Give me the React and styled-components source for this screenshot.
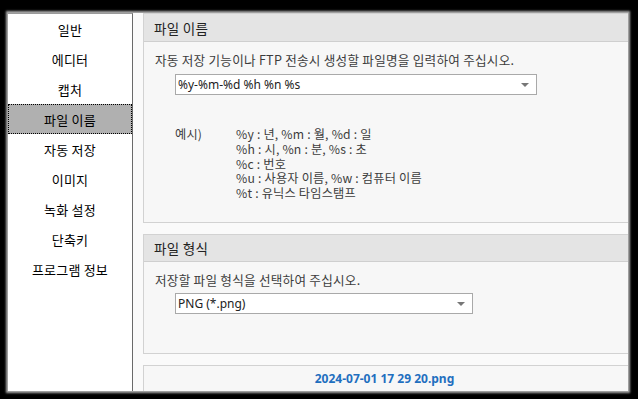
import React from 'react';
import styled, { createGlobalStyle } from 'styled-components';

const GlobalStyle = createGlobalStyle`
  html, body {
    margin: 0;
    padding: 0;
    background: #000;
  }
  body {
    font-family: 'Noto Sans CJK KR', 'Noto Sans', sans-serif;
  }
`;

const Frame = styled.div`
  width: 638px;
  height: 399px;
  box-sizing: border-box;
  padding: 13px 10px 8px 8px;
  background: #000;
`;

const Window = styled.div`
  display: flex;
  width: 620px;
  height: 378px;
  overflow: hidden;
  background: #fafafa;
  box-shadow: 0 0 2px 2px rgba(190, 190, 190, 0.9);
`;

const Sidebar = styled.nav`
  display: flex;
  flex-direction: column;
  width: 124px;
  flex-shrink: 0;
  background: #fff;
  border-top: 1px solid #9a9a9a;
  border-right: 1px solid #6a6a6a;
`;

const NavItem = styled.div`
  height: 30px;
  box-sizing: border-box;
  display: flex;
  align-items: center;
  justify-content: center;
  font-size: 13px;
  letter-spacing: 0.2px;
  color: #000;
  background: ${(p) => (p.$active ? '#b0b0b0' : 'transparent')};
  border: 1px dotted ${(p) => (p.$active ? '#000' : 'transparent')};
`;

const Content = styled.div`
  flex: 1;
  display: flex;
  flex-direction: column;
  gap: 11px;
  padding-left: 10px;
  background: #fafafa;
  margin-right: -12px;
`;

const Panel = styled.section`
  flex-shrink: 0;
  height: ${(p) => p.$h}px;
  box-sizing: border-box;
  border: 1px solid #d2d2d2;
  background: #f7f7f7;
`;

const PanelHeader = styled.div`
  height: ${(p) => p.$h}px;
  box-sizing: border-box;
  display: flex;
  align-items: center;
  padding-left: 10px;
  background: #e4e4e4;
  border-bottom: 1px solid #cfcfcf;
  font-size: 13.5px;
  letter-spacing: 0.3px;
  color: #222;
`;

const PanelBody = styled.div`
  padding: ${(p) => p.$pt}px 0 0 11px;
`;

const Hint = styled.div`
  font-size: 12.6px;
  letter-spacing: 0.25px;
  color: #3c3c3c;
  line-height: 16px;
`;

const Select = styled.div`
  margin: ${(p) => p.$mt}px 0 0 20px;
  width: ${(p) => p.$w}px;
  height: 21px;
  box-sizing: border-box;
  border: 1px solid #a9a9a9;
  background: #fff;
  display: flex;
  align-items: center;
  justify-content: space-between;
  padding: 0 7px 0 2px;
  font-family: 'Noto Sans', 'Noto Sans CJK KR', sans-serif;
  font-size: 12px;
  color: #222;
`;

const Caret = styled.span`
  width: 0;
  height: 0;
  border-left: 4px solid transparent;
  border-right: 4px solid transparent;
  border-top: 4px solid #777;
`;

const Example = styled.div`
  display: flex;
  margin: 32px 0 0 20px;
  font-size: 12.2px;
  letter-spacing: 0.2px;
  color: #3c3c3c;
`;

const ExampleLabel = styled.div`
  width: 61px;
  line-height: 14.8px;
`;

const ExampleLines = styled.div`
  display: flex;
  flex-direction: column;
  line-height: 14.8px;
`;

const FileName = styled.div`
  height: 24px;
  display: flex;
  align-items: center;
  justify-content: center;
  padding-right: 14px;
  font-family: 'Noto Sans', sans-serif;
  font-weight: bold;
  font-size: 12px;
  color: #1f6fbf;
`;

const navItems = ['일반', '에디터', '캡처', '파일 이름', '자동 저장', '이미지', '녹화 설정', '단축키', '프로그램 정보'];

const examples = [
  '%y : 년, %m : 월, %d : 일',
  '%h : 시, %n : 분, %s : 초',
  '%c : 번호',
  '%u : 사용자 이름, %w : 컴퓨터 이름',
  '%t : 유닉스 타임스탬프',
];

export default function App() {
  return (
    <>
      <GlobalStyle />
      <Frame>
        <Window>
          <Sidebar>
            {navItems.map((item) => (
              <NavItem key={item} $active={item === '파일 이름'}>
                {item}
              </NavItem>
            ))}
          </Sidebar>
          <Content>
            <Panel $h={210}>
              <PanelHeader $h={28}>파일 이름</PanelHeader>
              <PanelBody $pt={10}>
                <Hint>자동 저장 기능이나 FTP 전송시 생성할 파일명을 입력하여 주십시오.</Hint>
                <Select $mt={6} $w={362}>
                  <span>%y-%m-%d %h %n %s</span>
                  <Caret />
                </Select>
                <Example>
                  <ExampleLabel>예시)</ExampleLabel>
                  <ExampleLines>
                    {examples.map((line) => (
                      <div key={line}>{line}</div>
                    ))}
                  </ExampleLines>
                </Example>
              </PanelBody>
            </Panel>
            <Panel $h={120}>
              <PanelHeader $h={27}>파일 형식</PanelHeader>
              <PanelBody $pt={10}>
                <Hint>저장할 파일 형식을 선택하여 주십시오.</Hint>
                <Select $mt={5} $w={298}>
                  <span>PNG (*.png)</span>
                  <Caret />
                </Select>
              </PanelBody>
            </Panel>
            <Panel $h={40}>
              <FileName>2024-07-01 17 29 20.png</FileName>
            </Panel>
          </Content>
        </Window>
      </Frame>
    </>
  );
}
